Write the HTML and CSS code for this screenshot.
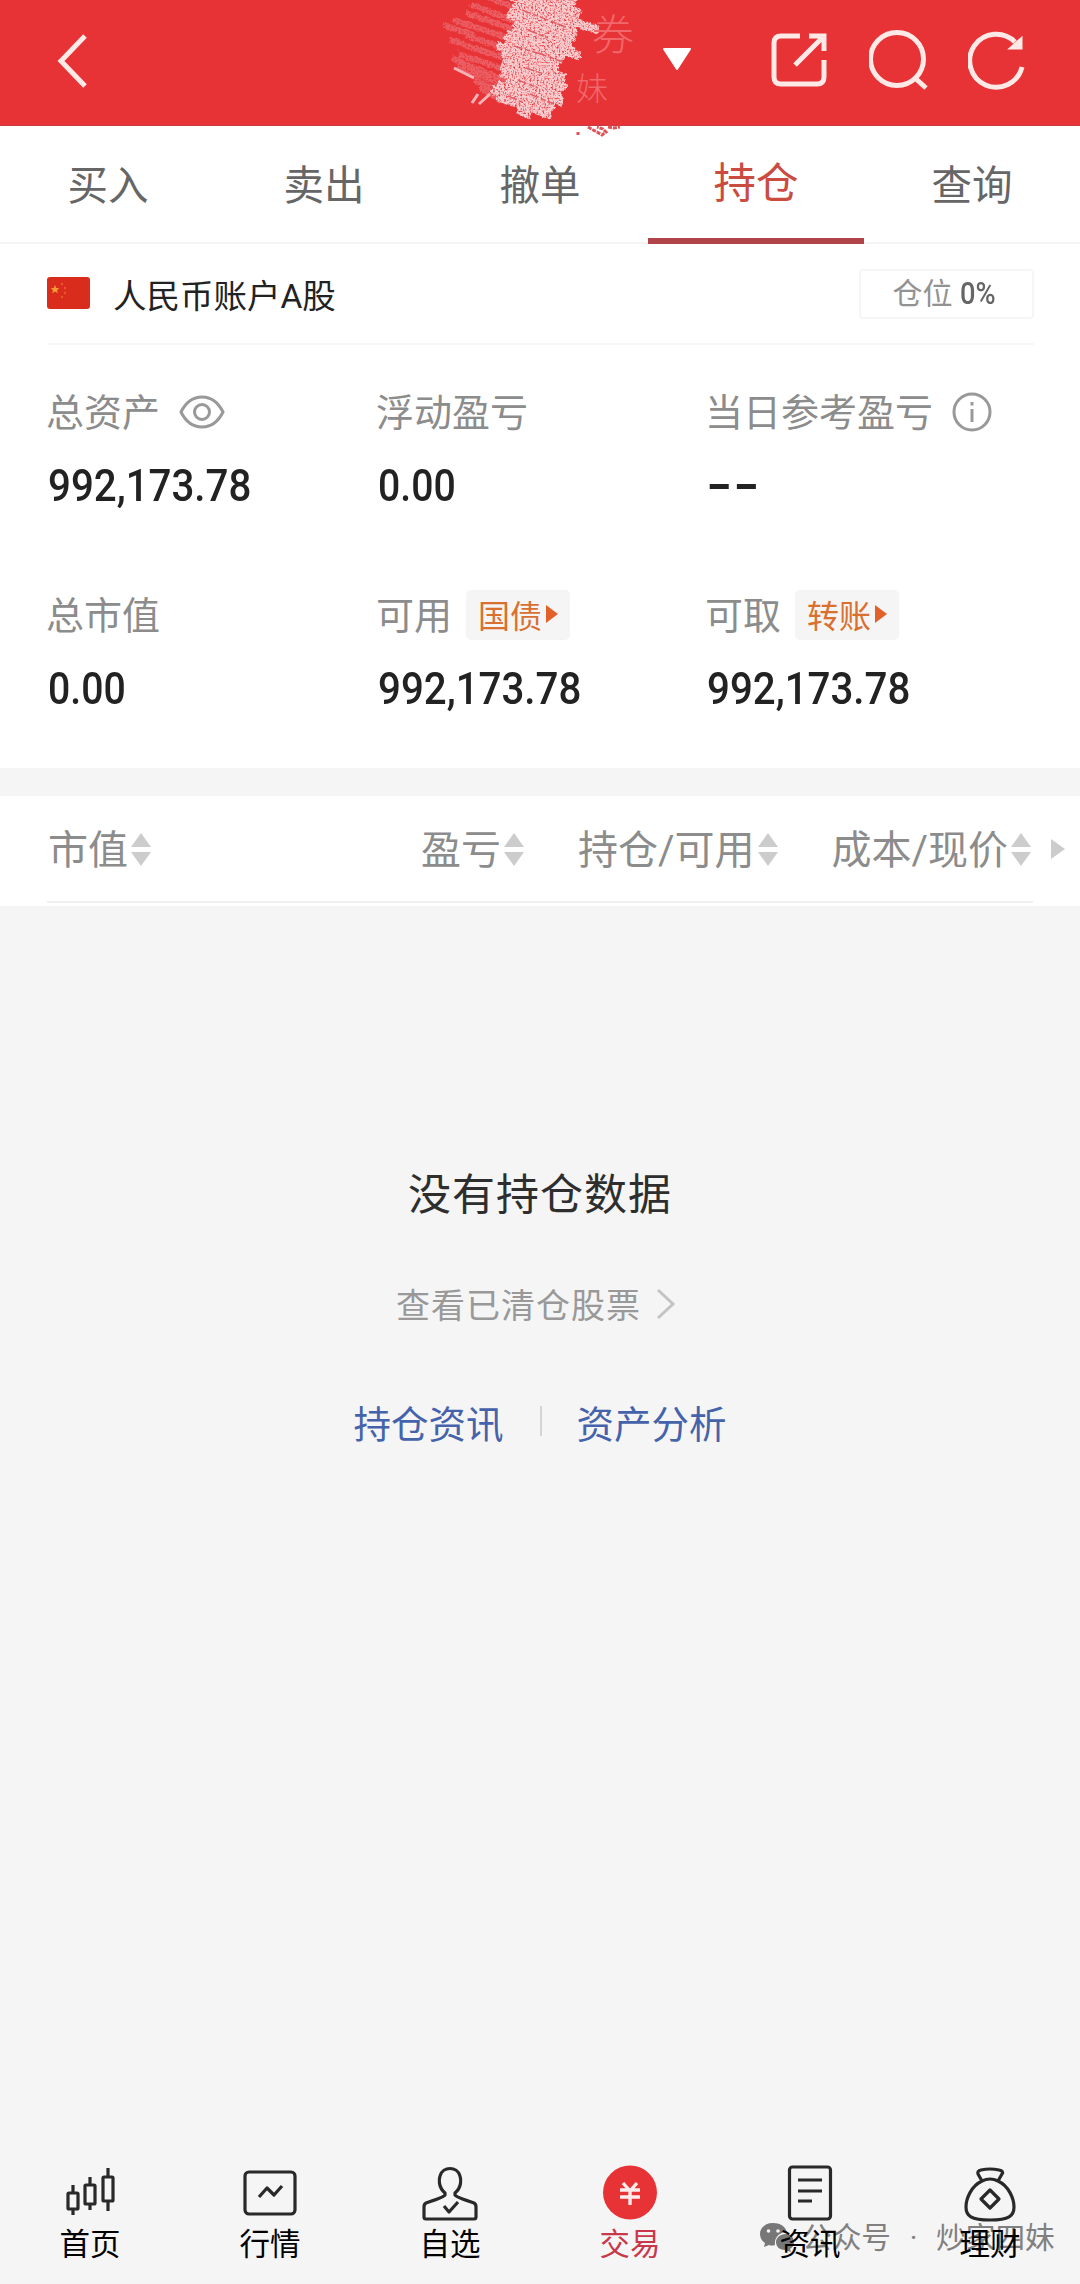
FILE: index.html
```html
<!DOCTYPE html>
<html lang="zh-CN">
<head>
  <meta charset="UTF-8" />
  <meta name="viewport" content="width=device-width, initial-scale=1.0"/>
  <title>持仓</title>
  <link rel="stylesheet" href="styles.css">
</head>
<body>

  <!-- Top bar -->
  <header class="topbar">
    <svg class="back" width="32" height="56" viewBox="0 0 32 56"><path d="M28 2 L4 27 L28 52"/></svg>
    <svg class="scribble" width="220" height="140" viewBox="0 0 220 140">
      <defs>
        <filter id="rough" x="-10%" y="-10%" width="120%" height="120%">
          <feTurbulence type="fractalNoise" baseFrequency="0.2" numOctaves="2" seed="4" result="n"/>
          <feDisplacementMap in="SourceGraphic" in2="n" scale="6" result="d"/>
          <feTurbulence type="fractalNoise" baseFrequency="0.55" numOctaves="2" seed="9"/>
          <feColorMatrix values="0 0 0 0 1  0 0 0 0 1  0 0 0 0 1  0 0 0 -3 2.4" result="g"/>
          <feComposite in="d" in2="g" operator="in"/>
        </filter>
      </defs>
      <g filter="url(#rough)">
        <path class="soft" d="M50 -6 l46 18 M40 4 l52 20 M36 13 l52 18 M24 20 l66 22 M14 25 l30 10 M36 36 l52 16 M20 40 l14 4 M34 45 l50 16 M28 54 l50 16 M22 58 l56 24 M26 66 l50 20 M44 80 l32 14 M50 88 l26 14"/>
        <path class="chalk" d="M84 -18 l62 22 M82 -10 l68 24 M72 -8 l72 30 M86 2 l82 28 M80 8 l66 24 M78 14 l68 24 M84 24 l58 20 M82 30 l62 22 M76 34 l74 22 M74 40 l60 20 M66 45 l62 20 M72 53 l56 18 M74 60 l62 18 M72 66 l64 22 M70 72 l62 22 M76 80 l56 22 M66 84 l58 24 M62 90 l56 20 M68 97 l54 18 M88 109 l14 6"/>
      </g>
      <path class="gap" d="M92 10 l44 17 M98 30 l20 8 M84 46 l30 9 M108 53 l25 9 M88 80 l20 8 M100 94 l24 10 M78 96 l14 6 M96 68 l18 6"/>
      <path class="scratch" d="M42 103 l6 -9 M49 104 l11 -10 M24 68 l20 10"/>
      <path class="crumb" d="M158 127 l5 3 4 2 5 3 4 -3 -3 -3 -6 -2 M178 127 l6 1 6 -1 M148 132 v3"/>
      <text class="ghost" x="162" y="50" font-size="42">券</text>
      <text class="ghost" x="146" y="100" font-size="32">妹</text>
    </svg>
    <svg class="caret" width="32" height="26" viewBox="0 0 32 26"><path d="M3 2 H29 L16 22 Z"/></svg>
    <div class="tools">
      <svg width="60" height="64" viewBox="0 0 60 64">
        <path d="M30 7 H11 Q4 7 4 14 V48 Q4 55 11 55 H47 Q54 55 54 48 V31 M39 7 H54 V22 M53 8 L25 36"/>
      </svg>
      <svg width="60" height="64" viewBox="0 0 60 64">
        <circle cx="28" cy="30" r="26.5"/><path d="M46 49 L57 59"/>
      </svg>
      <svg width="60" height="64" viewBox="0 0 60 64">
        <path d="M54 38 A26.5 26.5 0 1 1 47 13"/><path class="tip" d="M53 10 V19 H43 Z"/>
      </svg>
    </div>
  </header>

  <nav class="tabs">
    <div class="tab">买入</div>
    <div class="tab">卖出</div>
    <div class="tab">撤单</div>
    <div class="tab active">持仓</div>
    <div class="tab">查询</div>
  </nav>

  <!-- Account summary -->
  <section class="account">
    <div class="account-head">
      <svg class="flag" width="43" height="32" viewBox="0 0 43 32">
        <rect width="43" height="32" rx="3" fill="#d92c1c"/>
        <path d="M8 8 l1.3 3 3 .2 -2.3 2 .8 3 -2.8 -1.7 -2.8 1.7 .8 -3 -2.3 -2 3 -.2 Z" fill="#f79a35"/>
        <g fill="#e75a28"><circle cx="15" cy="7" r="1.2"/><circle cx="18" cy="11" r="1.2"/><circle cx="18" cy="16" r="1.2"/><circle cx="15" cy="20" r="1.2"/></g>
      </svg>
      <span class="account-name">人民币账户A股</span>
      <div class="position">仓位 <b>0%</b></div>
    </div>
    <div class="stats">
      <div class="stat">
        <div class="label">总资产
          <svg class="eye" width="46" height="34" viewBox="0 0 46 34"><path d="M2 17 C12 -3 34 -3 44 17 C34 37 12 37 2 17 Z"/><circle cx="23" cy="17" r="7.5"/></svg>
        </div>
        <div class="value">992,173.78</div>
      </div>
      <div class="stat">
        <div class="label">浮动盈亏</div>
        <div class="value zero">0.00</div>
      </div>
      <div class="stat">
        <div class="label">当日参考盈亏
          <svg class="info" width="40" height="40" viewBox="0 0 40 40"><circle cx="20" cy="20" r="18"/><path d="M20 17 V30 M20 10 V13.5"/></svg>
        </div>
        <div class="value dashes"><i></i><i></i></div>
      </div>
      <div class="stat">
        <div class="label">总市值</div>
        <div class="value zero">0.00</div>
      </div>
      <div class="stat">
        <div class="label">可用<span class="chip">国债<i></i></span></div>
        <div class="value">992,173.78</div>
      </div>
      <div class="stat">
        <div class="label">可取<span class="chip">转账<i></i></span></div>
        <div class="value">992,173.78</div>
      </div>
    </div>
  </section>

  <!-- Holdings table header -->
  <div class="columns">
    <div class="col"><span>市值</span><i class="sort"></i></div>
    <div class="col col-profit"><span>盈亏</span><i class="sort"></i></div>
    <div class="col col-hold"><span>持仓/可用</span><i class="sort"></i></div>
    <div class="col col-cost"><span>成本/现价</span><i class="sort"></i></div>
    <i class="more"></i>
  </div>

  <main class="empty">
    <div class="empty-title">没有持仓数据</div>
    <div class="cleared">查看已清仓股票
      <svg width="20" height="34" viewBox="0 0 20 34"><path d="M2 3 L17 17 L2 31"/></svg>
    </div>
    <div class="links"><a>持仓资讯</a><span class="sep"></span><a>资产分析</a></div>
  </main>

  <!-- Bottom navigation -->
  <footer class="bottom">
    <div class="mark">
      <svg width="34" height="30" viewBox="0 0 34 30">
        <path d="M13 0 C5 0 0 5 0 11 C0 15 2 18 5 20 L4 24 L9 22 Q12 23 15 22 C14 14 20 9 27 9 C25 3 20 0 13 0 Z"/>
        <path d="M26 11 C20 11 16 15 16 19 C16 24 20 27 25 27 L31 29 L30 26 C33 24 34 22 34 19 C34 15 31 11 26 11 Z"/>
        <g fill="#f5f5f5"><circle cx="8.5" cy="8" r="1.8"/><circle cx="18" cy="8" r="1.8"/></g>
      </svg>
      <span>公众号</span><span class="dot">·</span><span>炒家四妹</span>
    </div>
    <div class="item">
      <svg width="60" height="60" viewBox="0 0 60 60"><path d="M13 20 V28 M13 44 V50 M30 12 V20 M30 39 V45 M48 3 V12 M48 36 V46"/><rect x="8" y="28" width="10" height="16" rx="1"/><rect x="25" y="20" width="10" height="19" rx="1"/><rect x="43" y="12" width="10" height="24" rx="1"/></svg>
      <span>首页</span>
    </div>
    <div class="item">
      <svg width="60" height="60" viewBox="0 0 60 60"><rect x="5" y="7" width="50" height="42" rx="4"/><path d="M19 32 L27 23 L34 30 L42 21"/></svg>
      <span>行情</span>
    </div>
    <div class="item">
      <svg width="60" height="60" viewBox="0 0 60 60"><path d="M25 28 C18 22 19 14 20 11 C23 1 37 1 40 11 C41 14 42 22 35 28 L35 30 Q36 32 54 38 Q56 39 56 42 V52 Q56 54 54 54 H6 Q4 54 4 52 V42 Q4 39 6 38 Q24 32 25 30 Z M24 41 L29 47 L38 37"/></svg>
      <span>自选</span>
    </div>
    <div class="item current">
      <svg width="60" height="60" viewBox="0 0 60 60"><circle class="coin" cx="30" cy="27.5" r="27"/><path class="yen" d="M23 18 L30 26 L37 18 M20 25 H40 M20 32 H40 M30 25 V40"/></svg>
      <span>交易</span>
    </div>
    <div class="item">
      <svg width="60" height="60" viewBox="0 0 60 60"><rect x="9.5" y="2" width="41" height="52" rx="3"/><path d="M18 15 H42 M18 26 H42 M18 36 H32"/></svg>
      <span>资讯</span>
    </div>
    <div class="item">
      <svg width="60" height="60" viewBox="0 0 60 60"><path d="M22 16 L18 9 Q17 6 21 5 Q30 3 39 5 Q44 6 42 9 L38 16 M22 16 Q30 12 38 16 C49 21 54 34 54 42 C54 51 49 55 30 55 C11 55 6 51 6 42 C6 34 11 21 22 16 Z M30 25 L39 34 L30 43 L21 34 Z"/></svg>
      <span>理财</span>
    </div>
  </footer>

</body>
</html>
```
FILE: styles.css
```css
* {
  box-sizing: border-box;
}

body {
  margin: 0;
  width: 1080px;
  height: 2284px;
  display: flex;
  flex-direction: column;
  background: #f5f5f5;
  color: #222;
  font-family: Roboto, "Noto Sans CJK SC", sans-serif;
  overflow: hidden;
}

svg {
  display: block;
  fill: none;
  flex: none;
}

/* top bar */
.topbar {
  position: relative;
  height: 126px;
  background: #e73236;
  border-bottom: 1px solid #c43a40;
  display: flex;
  align-items: flex-start;
  padding: 0 52px 0 57px;
}

.back {
  margin-top: 34px;
  stroke: #ffe9e7;
  stroke-width: 5;
}

.scribble {
  position: absolute;
  left: 430px;
  top: 0;
  z-index: 1;
}

.soft {
  stroke: #ee8488;
  stroke-width: 6;
  opacity: .55;
}

.chalk {
  stroke: #f8cdd0;
  stroke-width: 9;
}

.gap {
  stroke: #df5f68;
  stroke-width: 1.5;
  stroke-dasharray: 9 3 5 2;
}

.scratch {
  stroke: #f6b3b6;
  stroke-width: 3;
}

.crumb {
  stroke: #df5258;
  stroke-width: 3;
  stroke-dasharray: 4 1;
}

.ghost {
  fill: #f0686b;
  font-weight: 300;
}

.caret {
  margin: 47px 0 0 572px;
  fill: #fff;
  stroke: #fff;
  stroke-width: 2;
  stroke-linejoin: round;
}

.tools {
  margin: 29px 0 0 auto;
  display: flex;
  gap: 39px;
  stroke: #ffe9e7;
  stroke-width: 5;
}

.tip {
  fill: #ffe9e7;
  stroke-width: 3;
}

/* tabs */
.tabs {
  height: 118px;
  background: #fff;
  border-bottom: 2px solid #f4f4f4;
  display: flex;
}

.tab {
  flex: 1;
  height: 118px;
  line-height: 120px;
  text-align: center;
  font-size: 40.5px;
  color: #666;
}

.tab.active {
  font-size: 42.5px;
  line-height: 116px;
  color: #cb4b40;
  border-bottom: 6px solid #b04449;
}

/* account summary */
.account {
  height: 524px;
  background: #fff;
  padding: 0 46px 0 47px;
}

.account-head {
  height: 101px;
  border-bottom: 2px solid #f7f7f7;
  display: flex;
  align-items: center;
}

.account-name {
  margin-left: 23px;
  font-size: 33.5px;
}

.flag {
  margin-bottom: 2px;
}

.position {
  margin: 0 0 0 auto;
  width: 175px;
  height: 50px;
  line-height: 46px;
  border: 2px solid #f6f6f6;
  border-radius: 4px;
  text-align: center;
  font-size: 30px;
  color: #929292;
}

.position b {
  font-weight: 500;
  font-size: 31px;
  color: #666;
  display: inline-block;
  transform: scaleX(.88);
  transform-origin: left;
}

.stats {
  display: grid;
  grid-template-columns: 330px 329px 1fr;
  grid-template-rows: 203px 203px;
  padding-top: 40px;
}

/* the text sits a little above the icons and chips */
.label {
  height: 54px;
  margin-left: -1px;
  padding-bottom: 6px;
  display: flex;
  align-items: center;
  font-size: 38px;
  white-space: nowrap;
  color: #8c8c8c;
}

.eye,
.info {
  margin: 6px 0 0 19px;
  stroke: #999;
  stroke-width: 3;
}

.value {
  height: 46px;
  margin: 24px 0 0 1px;
  line-height: 46px;
  font-size: 44.5px;
  font-weight: 500;
  transform: scaleX(.905);
  transform-origin: left;
}

.zero {
  transform: scaleX(.88);
}

.dashes {
  display: flex;
  align-items: center;
  gap: 9px;
  padding-left: 3px;
}

.dashes i {
  width: 21px;
  height: 5px;
  background: #222;
}

.chip {
  margin: 5px 0 0 14px;
  height: 50px;
  padding: 0 12px 1px;
  border-radius: 5px;
  background: #f5f5f5;
  display: flex;
  align-items: center;
  font-size: 32px;
  color: #d9702f;
}

.chip i {
  margin-left: 4px;
  border-left: 12px solid #e2602a;
  border-top: 9px solid transparent;
  border-bottom: 9px solid transparent;
}

/* table header */
.columns {
  height: 110px;
  margin-top: 28px;
  padding: 0 15px 4px 48px;
  background: linear-gradient(#f0f0f0, #f0f0f0) 47px 105px / 986px 2px no-repeat #fff;
  display: flex;
  align-items: center;
  font-size: 40px;
  color: #8c8c8c;
}

.col {
  display: flex;
  align-items: center;
  white-space: nowrap;
}

.col span {
  margin-bottom: 4px;
}

.col-profit {
  margin-left: 270px;
}

.col-hold,
.col-cost {
  margin-left: 54px;
}

.sort {
  margin-left: 3px;
}

.sort::before,
.sort::after {
  content: "";
  display: block;
  border: 10px solid transparent;
  border-top-width: 0;
  border-bottom: 14px solid #ccc;
}

.sort::after {
  margin-top: 5px;
  border-bottom-width: 0;
  border-top: 14px solid #ccc;
}

.more {
  margin-left: auto;
  border-left: 14px solid #ccc;
  border-top: 10px solid transparent;
  border-bottom: 10px solid transparent;
}

/* empty state */
.empty {
  flex: 1;
  padding-top: 257px;
  display: flex;
  flex-direction: column;
  align-items: center;
}

.empty-title {
  line-height: 64px;
  font-size: 43px;
  letter-spacing: 1px;
  color: #2e2e2e;
}

.cleared {
  height: 50px;
  margin: 51px 0 0 -8px;
  display: flex;
  align-items: center;
  font-size: 34px;
  letter-spacing: 1px;
  color: #999;
}

.cleared svg {
  margin: 2px 0 0 15px;
  stroke: #c4c4c4;
  stroke-width: 3;
}

.links {
  height: 56px;
  margin-top: 65px;
  display: flex;
  align-items: center;
  font-size: 37.5px;
  color: #4563ab;
}

.sep {
  width: 2px;
  height: 30px;
  margin: 0 35px 0 36px;
  background: #d4d4d4;
}

/* bottom navigation */
.bottom {
  position: relative;
  height: 122px;
  display: flex;
}

.item {
  position: relative;
  width: 180px;
  display: flex;
  flex-direction: column;
  align-items: center;
  font-size: 30.5px;
  color: #000;
}

.item svg {
  margin-top: 3px;
  stroke: #292929;
  stroke-width: 3.2;
  stroke-linejoin: round;
}

.item span {
  margin-top: -2px;
  line-height: 44px;
}

.item .coin {
  fill: #e73236;
  stroke: none;
}

.item .yen {
  stroke: #ffeceb;
  stroke-width: 3.4;
}

.current {
  color: #c9374b;
}

/* account mark under the nav labels */
.mark {
  position: absolute;
  left: 760px;
  top: 54px;
  display: flex;
  align-items: center;
  font-size: 29.7px;
  line-height: 44px;
  color: #808080;
}

.mark svg {
  margin-right: 8px;
  fill: #777;
}

.mark .dot {
  width: 45px;
  text-align: center;
}
```
